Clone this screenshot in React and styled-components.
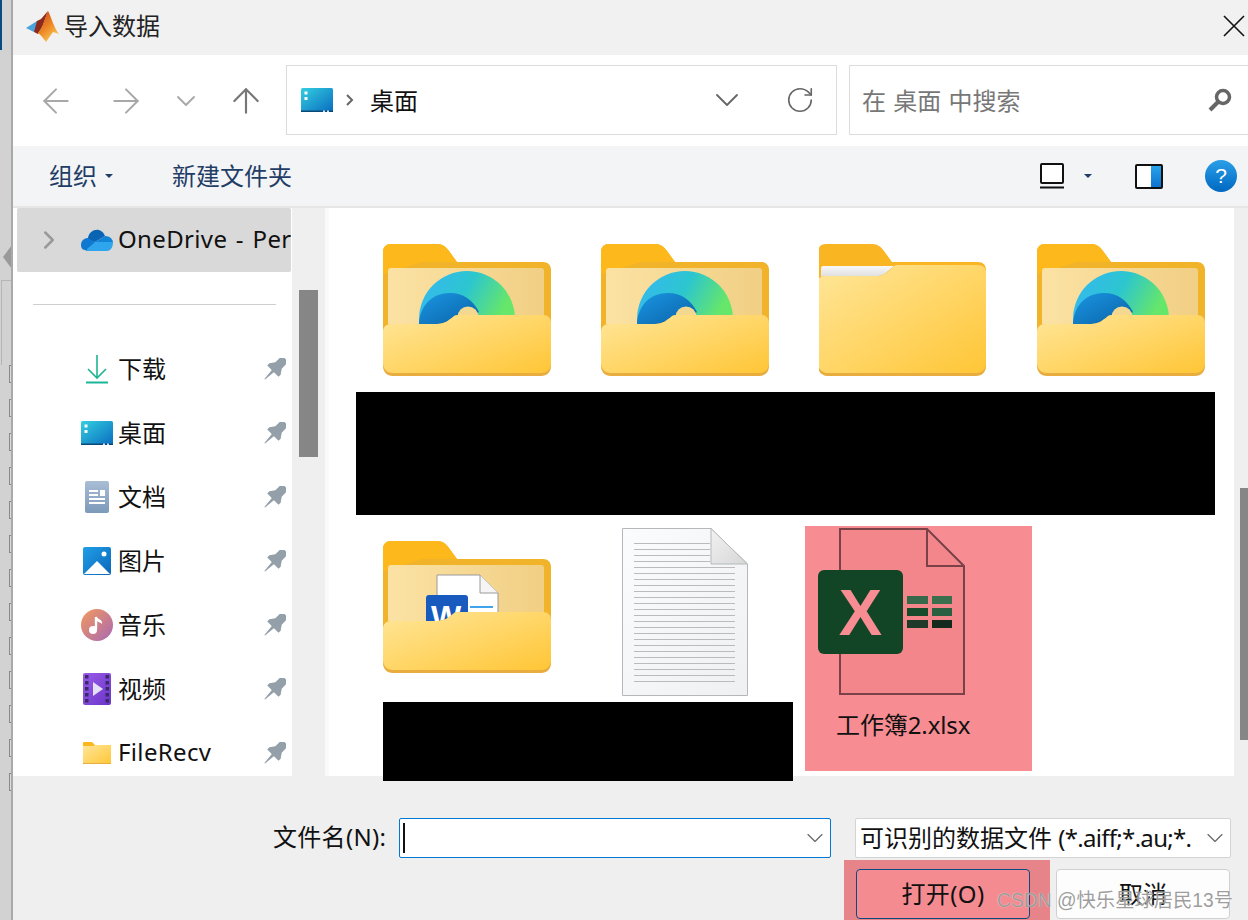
import React from 'react';
import styled, { createGlobalStyle } from 'styled-components';
import { ArrowLeft, ArrowRight, ArrowUp, ChevronDown, ChevronRight, RotateCw } from 'lucide-react';

const uiFont = `"Noto Sans", "Noto Sans CJK SC", sans-serif`;

const GlobalStyle = createGlobalStyle`
  html, body { margin: 0; padding: 0; background: #efefef; }
  * { box-sizing: border-box; }
`;

const Page = styled.div`
  display: flex;
  width: 1248px;
  height: 920px;
  overflow: hidden;
  font-family: ${uiFont};
  color: #111;
`;

// the window behind the dialog
const ParentEdge = styled.div`
  flex: 0 0 13px;
  height: 920px;
  background: #d2d2d2;
  border-right: 2px solid #a9a9a9;
  display: flex;
  flex-direction: column;
  overflow: hidden;
`;
const ParentTab = styled.div`
  flex: none;
  width: 2px;
  height: 50px;
  background: #0a4a80;
`;
const ParentArrow = styled.div`
  flex: none;
  margin: 195px 0 0 3px;
  width: 0;
  height: 0;
  border-top: 12px solid transparent;
  border-bottom: 12px solid transparent;
  border-right: 9px solid #9a9a9a;
`;
const ParentTable = styled.div`
  flex: none;
  margin: 11px 0 0 1px;
  height: 85px;
  border-top: 1px solid #b5b5b5;
  border-left: 1px solid #b5b5b5;
`;
const ParentChecks = styled.div`
  flex: none;
  display: flex;
  flex-direction: column;
  gap: 16px;
  padding-left: 9px;
`;
const ParentCheck = styled.div`
  flex: none;
  width: 6px;
  height: 18px;
  border: 1px solid #8a8a8a;
  background: #dcdcdc;
`;

const Dialog = styled.div`
  flex: 1;
  min-width: 0;
  display: flex;
  flex-direction: column;
`;

const TitleBar = styled.div`
  height: 55px;
  flex: none;
  background: #f1f1f1;
  display: flex;
  align-items: center;
  padding: 0 2px 3px 13px;
`;
const TitleText = styled.span`
  margin-left: 5px;
  padding-bottom: 4px;
  font-size: 24px;
  color: #222;
`;
const CloseButton = styled.div`
  margin-left: auto;
  display: flex;
`;

const NavBar = styled.div`
  height: 91px;
  flex: none;
  background: #fff;
  display: flex;
  align-items: flex-start;
  padding: 10px 0 0 13px;
`;
const NavButton = styled.div`
  flex: none;
  width: 60px;
  height: 72px;
  margin-right: ${(p) => p.$after || 0}px;
  display: flex;
  align-items: center;
  justify-content: center;
  color: ${(p) => p.$color};
`;
const AddressBox = styled.div`
  flex: 0 0 551px;
  height: 70px;
  border: 1.5px solid #dcdcdc;
  display: flex;
  align-items: center;
  padding-left: 14px;
  font-size: 24px;
`;
const Crumb = styled.span`
  margin-left: 16px;
  padding-bottom: 2px;
  color: #111;
`;
const CrumbArrow = styled.svg`
  flex: none;
  margin-left: 12px;
`;
const AddressTail = styled.div`
  margin-left: auto;
  display: flex;
  align-items: center;
  gap: 38px;
  padding-right: 21px;
  color: #666;
`;
const SearchBox = styled.div`
  flex: none;
  width: 410px;
  height: 70px;
  margin-left: 12px;
  border: 1.5px solid #dcdcdc;
  display: flex;
  align-items: center;
  padding: 0 26px 0 12px;
  font-size: 24px;
  color: #777;
`;
const SearchHint = styled.span`
  padding-bottom: 2px;
  word-spacing: 1px;
`;
const SearchIconSlot = styled.div`
  margin-left: auto;
  display: flex;
`;

const CommandBar = styled.div`
  height: 62px;
  flex: none;
  background: #f3f4f6;
  border-bottom: 2px solid #e6e6e6;
  display: flex;
  align-items: center;
  padding: 0 10px 0 36px;
  font-size: 24px;
  color: #1f3d66;
`;
const CommandText = styled.span`
  margin-left: ${(p) => p.$left || 0}px;
  padding-bottom: 4px;
`;
const Caret = styled.span`
  width: 0;
  height: 0;
  margin-left: ${(p) => p.$left || 0}px;
  border-left: 4px solid transparent;
  border-right: 4px solid transparent;
  border-top: 4px solid #1f3d66;
`;
const CommandGroup = styled.div`
  margin-left: ${(p) => p.$left}px;
  display: flex;
  align-items: center;
`;

const Main = styled.div`
  height: 568px;
  flex: none;
  display: flex;
`;

const Sidebar = styled.div`
  flex: 0 0 279px;
  background: #fff;
  overflow: hidden;
`;
const SelectedRow = styled.div`
  height: 64px;
  margin: 0 1px 0 4px;
  background: #d9d9d9;
  border-radius: 2px;
  display: flex;
  align-items: center;
  padding-left: 17px;
  overflow: hidden;
  white-space: nowrap;
  color: #999;
  & > * { flex: none; }
`;
const RowIcon = styled.div`
  margin-left: 17px;
  display: flex;
`;
const RowLabel = styled.span`
  margin-left: 5px;
  padding-bottom: 4px;
  font-size: 24px;
  letter-spacing: ${(p) => (p.$latin ? 0.35 : 0)}px;
  word-spacing: ${(p) => (p.$latin ? 2 : 0)}px;
  color: #111;
`;
const Divider = styled.div`
  margin: 32px 16px 32px 20px;
  height: 1px;
  background: #cfcfcf;
`;
const QuickRow = styled.div`
  height: 64px;
  display: flex;
  align-items: center;
  padding: 0 6px 0 68px;
`;
const IconSlot = styled.div`
  flex: 0 0 32px;
  display: flex;
  justify-content: center;
`;
const PinSlot = styled.div`
  margin-left: auto;
  display: flex;
`;

const ScrollTrack = styled.div`
  flex: 0 0 ${(p) => p.$width}px;
  background: #efefef;
  padding: ${(p) => p.$top}px 0 0 ${(p) => p.$left}px;
`;
const ScrollThumb = styled.div`
  width: ${(p) => p.$width}px;
  height: ${(p) => p.$height}px;
  background: #868686;
`;
const TrackGap = styled.div`
  flex: 0 0 4px;
  background: #fafafa;
`;

const Content = styled.div`
  flex: 1;
  min-width: 0;
  background: #fff;
  padding: 36px 0 0 27px;
  display: flex;
  flex-direction: column;
  & > * { flex: none; }
`;
const IconRow = styled.div`
  display: flex;
  gap: 50px;
  padding-left: 27px;
`;
const Redaction = styled.div`
  position: relative;
  z-index: 1;
  background: #000;
  width: ${(p) => p.$width}px;
  height: ${(p) => p.$height}px;
`;
const WideRedaction = styled(Redaction)`
  margin-top: 16px;
`;
const SecondRow = styled.div`
  margin-top: 11px;
  display: flex;
`;
const SecondLeft = styled.div`
  margin-left: 27px;
  width: 410px;
`;
const SecondIcons = styled.div`
  height: 176px;
  display: flex;
  gap: 71px;
`;
const FolderSlot = styled.div`
  padding-top: 15px;
`;
const DocSlot = styled.div`
  padding-top: 2px;
`;
const SelectedTile = styled.div`
  margin-left: 12px;
  width: 227px;
  height: 245px;
  background: #f78d92;
  padding: 1px 0 0 13px;
  display: flex;
  flex-direction: column;
`;
const TileName = styled.div`
  margin: 12px 0 0 18px;
  font-size: 24px;
  line-height: 32px;
  letter-spacing: -0.1px;
  color: #111;
`;

const Footer = styled.div`
  position: relative;
  flex: 1;
  background: #efefef;
  padding-top: 42px;
`;
const FileRow = styled.div`
  display: flex;
  align-items: center;
  padding-left: 260px;
`;
const FieldLabel = styled.span`
  flex: none;
  width: 126px;
  padding-bottom: 5px;
  font-size: 24px;
  letter-spacing: 0.3px;
`;
const FileInput = styled.div`
  flex: none;
  width: 432px;
  height: 40px;
  background: #fff;
  border: 1.5px solid #0078d4;
  border-radius: 2px;
  display: flex;
  align-items: center;
  padding: 0 1px 0 3px;
  justify-content: space-between;
  color: #666;
`;
const TextCaret = styled.div`
  width: 1.5px;
  height: 30px;
  background: #111;
`;
const TypeSelect = styled.div`
  flex: none;
  margin-left: 24px;
  width: 376px;
  height: 40px;
  background: #fff;
  border: 1px solid #d4d4d4;
  border-radius: 2px;
  display: flex;
  align-items: center;
  padding: 0 1px 0 4px;
  color: #666;
`;
const TypeText = styled.div`
  width: 332px;
  margin-right: auto;
  padding-bottom: 4px;
  overflow: hidden;
  white-space: nowrap;
  font-size: 24px;
  color: #111;
`;
const FilterPattern = styled.span`
  letter-spacing: -0.7px;
`;
const ButtonRow = styled.div`
  margin-top: 2px;
  display: flex;
  justify-content: flex-end;
  padding-right: 18px;
`;
const OpenMark = styled.div`
  width: 206px;
  height: 60px;
  background: #e78489;
  padding: 9px 20px 0 12px;
`;
const DialogButton = styled.div`
  height: 50px;
  width: 174px;
  margin-left: ${(p) => (p.$primary ? 0 : 6)}px;
  margin-top: ${(p) => (p.$primary ? 0 : 9)}px;
  padding-bottom: 4px;
  background: ${(p) => (p.$primary ? '#f48b90' : '#fdfdfd')};
  border: 1px solid ${(p) => (p.$primary ? '#0a4a80' : '#d0d0d0')};
  border-radius: 4px;
  display: flex;
  align-items: center;
  justify-content: center;
  font-size: 24px;
  letter-spacing: ${(p) => (p.$primary ? 0.4 : 0)}px;
  color: #111;
`;
const Watermark = styled.div`
  position: absolute;
  left: 984px;
  top: 114px;
  font-family: "Liberation Sans", "Noto Sans CJK SC", sans-serif;
  font-size: 19.3px;
  line-height: 22px;
  white-space: nowrap;
  color: rgba(140, 140, 140, 0.85);
  text-shadow: 0 0 1px rgba(255, 255, 255, 0.9);
`;
const GradientDefs = styled.svg`
  position: absolute;
  width: 0;
  height: 0;
`;

const SharedGradients = () => (
  <GradientDefs aria-hidden="true">
    <defs>
      <linearGradient id="front" x1="0" y1="0" x2="1" y2="1">
        <stop offset="0" stopColor="#ffe699" />
        <stop offset="1" stopColor="#ffc636" />
      </linearGradient>
      <linearGradient id="inner" x1="0" y1="0" x2="1" y2="0">
        <stop offset="0" stopColor="#fbe2a4" />
        <stop offset="1" stopColor="#f1cf84" />
      </linearGradient>
      <linearGradient id="edge" x1="0" y1="0" x2="1" y2="0.3">
        <stop offset="0" stopColor="#37b6f6" />
        <stop offset="0.55" stopColor="#2cc6cf" />
        <stop offset="1" stopColor="#66e66a" />
      </linearGradient>
      <linearGradient id="edgeDark" x1="0" y1="0" x2="1" y2="1">
        <stop offset="0" stopColor="#1a96e2" />
        <stop offset="1" stopColor="#0a62a8" />
      </linearGradient>
      <linearGradient id="desktop" x1="0" y1="0" x2="1" y2="1">
        <stop offset="0" stopColor="#33cfe0" />
        <stop offset="1" stopColor="#0a6cc0" />
      </linearGradient>
      <linearGradient id="doc" x1="0" y1="0" x2="0" y2="1">
        <stop offset="0" stopColor="#a9bdd5" />
        <stop offset="1" stopColor="#7c9aba" />
      </linearGradient>
      <linearGradient id="picture" x1="0" y1="0" x2="1" y2="1">
        <stop offset="0" stopColor="#1f9fe6" />
        <stop offset="1" stopColor="#0d66bb" />
      </linearGradient>
      <linearGradient id="music" x1="0" y1="0" x2="1" y2="1">
        <stop offset="0" stopColor="#f39a5c" />
        <stop offset="1" stopColor="#a968b4" />
      </linearGradient>
      <linearGradient id="video" x1="0" y1="0" x2="1" y2="1">
        <stop offset="0" stopColor="#9a5be8" />
        <stop offset="1" stopColor="#6a35c8" />
      </linearGradient>
      <linearGradient id="help" x1="0" y1="0" x2="0" y2="1">
        <stop offset="0" stopColor="#2a9fe8" />
        <stop offset="1" stopColor="#0068c2" />
      </linearGradient>
      <linearGradient id="pane" x1="0" y1="0" x2="0" y2="1">
        <stop offset="0" stopColor="#27a3ea" />
        <stop offset="1" stopColor="#0d73cf" />
      </linearGradient>
      <linearGradient id="paper" x1="0" y1="0" x2="1" y2="1">
        <stop offset="0" stopColor="#fbfcfd" />
        <stop offset="1" stopColor="#eef0f2" />
      </linearGradient>
      <linearGradient id="fold" x1="0" y1="0" x2="1" y2="1">
        <stop offset="0" stopColor="#f2f2f2" />
        <stop offset="1" stopColor="#d6d6d6" />
      </linearGradient>
      <linearGradient id="sheet" x1="0" y1="0" x2="0" y2="1">
        <stop offset="0" stopColor="#f8f8f8" />
        <stop offset="1" stopColor="#dcdcdc" />
      </linearGradient>
      <linearGradient id="peak" x1="0" y1="0" x2="0.6" y2="1">
        <stop offset="0" stopColor="#c9401a" />
        <stop offset="0.6" stopColor="#ee8a26" />
        <stop offset="1" stopColor="#f9c75c" />
      </linearGradient>
    </defs>
  </GradientDefs>
);

const MatlabLogo = () => (
  <svg width="33" height="31" viewBox="0 0 33 31">
    <path d="M0 17 L11 10 L19 15 L12 21 L8 21 Z" fill="#4aa3dc" />
    <path d="M11 10 L15 8 L22 0 L17 14 L12 23 L8 21 Z" fill="#8e2a1c" />
    <path d="M22 0 C25 5 27 15 33 23 L27 21 L20 31 C17 27 15 24 12 22 C17 16 19 7 22 0 Z" fill="url(#peak)" />
  </svg>
);

const DesktopIcon = ({ width = 32, height = 24 }) => (
  <svg width={width} height={height} viewBox="0 0 32 24">
    <rect width="32" height="24" rx="1.5" fill="url(#desktop)" />
    <rect y="22.5" width="32" height="1.5" fill="#0a4a78" />
    <rect x="3.5" y="3.5" width="3" height="3" fill="#fff" />
    <rect x="3.5" y="9" width="3" height="3" fill="#fff" />
    <rect x="22" y="22.5" width="2" height="1.5" fill="#cfe6f5" />
    <rect x="26" y="22.5" width="2" height="1.5" fill="#cfe6f5" />
  </svg>
);

const OneDriveIcon = () => (
  <svg width="32" height="22" viewBox="0 0 32 22">
    <path d="M7 9 C8 3 13 0 18 1 C21 2 23 4 24 7 L14 13 L5 10 Z" fill="#0a64b4" />
    <path d="M14 13 L24 7 C28 7 31 9 32 13 L20 18 Z" fill="#1284d8" />
    <path d="M4 21 C1 21 0 18 0 16 C0 12 3 9 7 9 L14 13 L20 18 L14 22 L6 22 Z" fill="#0f78d0" />
    <path d="M6 22 L26 22 C29 22 32 19 32 13 L14 13 L6 20 Z" fill="#2ea5ec" />
  </svg>
);

const DownloadIcon = () => (
  <svg width="24" height="30" viewBox="0 0 24 30">
    <path d="M12 1 V24 M3 15 L12 24 L21 15" fill="none" stroke="#1fb591" strokeWidth="1.6" />
    <rect x="1" y="27.5" width="22" height="2" fill="#1ab59a" />
  </svg>
);

const DocsIcon = () => (
  <svg width="24" height="32" viewBox="0 0 24 32">
    <rect width="24" height="32" rx="2" fill="url(#doc)" />
    <path d="M4 10 H13 M4 14 H13 M4 18 H20 M4 22 H20" stroke="#fff" strokeWidth="1.8" />
    <rect x="15" y="9" width="5" height="6" fill="#fff" />
  </svg>
);

const PicturesIcon = () => (
  <svg width="28" height="28" viewBox="0 0 28 28">
    <rect width="28" height="28" rx="2" fill="url(#picture)" />
    <circle cx="21" cy="7" r="2.5" fill="#fff" />
    <path d="M1 27 L14 14 L27 27 Z" fill="#fff" />
  </svg>
);

const MusicIcon = () => (
  <svg width="32" height="32" viewBox="0 0 32 32">
    <circle cx="16" cy="16" r="16" fill="url(#music)" />
    <path d="M15 8 V20" stroke="#fff" strokeWidth="2.4" />
    <path d="M15 7 C16 10 20 10 21 13 L21 15 C19 13 17 13 15 12 Z" fill="#fff" />
    <circle cx="12" cy="21" r="4" fill="#fff" />
  </svg>
);

const VideoIcon = () => (
  <svg width="28" height="32" viewBox="0 0 28 32">
    <rect width="28" height="32" rx="2" fill="url(#video)" />
    {[2, 8, 14, 20, 26].map((y) => (
      <g key={y} fill="#3a2a6a">
        <rect x="2" y={y} width="3.5" height="3.5" />
        <rect x="22.5" y={y} width="3.5" height="3.5" />
      </g>
    ))}
    <path d="M10 9 L20 16 L10 23 Z" fill="#e6e0f6" />
  </svg>
);

const SmallFolderIcon = () => (
  <svg width="28" height="22" viewBox="0 0 28 22">
    <path d="M0 1 C0 0 1 0 1 0 H9 L12 3 H28 V10 H0 Z" fill="#fcb71c" />
    <path d="M0 4 H10 L12 3 H28 V21 C28 22 27 22 27 22 H1 C0 22 0 21 0 21 Z" fill="url(#front)" />
    <rect y="21" width="28" height="1" fill="#e8ad3e" />
  </svg>
);

const PinIcon = () => (
  <svg width="22" height="22" viewBox="0 0 22 22">
    <g transform="rotate(45 11 11)" fill="#93a0a9">
      <path d="M5 -3.5 H17 V-1 H15.5 V6 L19 11 V14 H3 V11 L6.5 6 V-1 H5 Z" />
      <path d="M9.4 13 H12.6 L11.5 25.5 H10.5 Z" />
    </g>
  </svg>
);

const SearchIcon = () => (
  <svg width="24" height="24" viewBox="0 0 24 24">
    <circle cx="15" cy="9" r="6.5" fill="none" stroke="#666" strokeWidth="3.5" />
    <path d="M10 14 L2 22" stroke="#666" strokeWidth="4" />
  </svg>
);

const ViewIcon = () => (
  <svg width="24" height="26" viewBox="0 0 24 26">
    <rect x="1" y="1" width="22" height="19" rx="1" fill="#fff" stroke="#111" strokeWidth="2" />
    <rect x="0" y="23.5" width="24" height="2" fill="#111" />
  </svg>
);

const PaneIcon = () => (
  <svg width="28" height="25" viewBox="0 0 28 25">
    <rect x="1" y="1" width="26" height="23" rx="1" fill="#fff" stroke="#111" strokeWidth="2" />
    <rect x="16" y="2" width="10" height="21" fill="url(#pane)" />
  </svg>
);

const HelpIcon = () => (
  <svg width="32" height="32" viewBox="0 0 32 32">
    <circle cx="16" cy="16" r="16" fill="url(#help)" />
    <text x="16" y="23" textAnchor="middle" fontFamily="Liberation Sans, sans-serif" fontSize="21" fill="#fff">?</text>
  </svg>
);

// folder back, what peeks out of it, and the front flap
const FolderBack = () => (
  <>
    <path d="M0 8 C0 3 3 0 8 0 H54 C60 0 63 3 66 7 L74 18 H160 C165 18 168 21 168 26 V100 H0 Z" fill="#f0b32a" />
    <path d="M0 8 C0 3 3 0 8 0 H54 C60 0 63 3 66 7 L74 18 H40 L0 30 Z" fill="#fdb91c" />
  </>
);
const FolderFront = () => (
  <>
    <path d="M0 88 C0 83 3 80 8 80 H54 C62 80 66 76 70 73 C72 71 74 71 78 71 H160 C165 71 168 74 168 79 V122 C168 128 164 132 158 132 H10 C4 132 0 128 0 122 Z" fill="#e8ad3e" />
    <path d="M0 88 C0 83 3 80 8 80 H54 C62 80 66 76 70 73 C72 71 74 71 78 71 H160 C165 71 168 74 168 79 V119 C168 125 164 129 158 129 H10 C4 129 0 125 0 119 Z" fill="url(#front)" />
  </>
);
const FolderFrame = ({ children }) => (
  <svg width="168" height="132" viewBox="0 0 168 132">
    <FolderBack />
    <rect x="5" y="24" width="156" height="70" rx="3" fill="url(#inner)" />
    {children}
    <FolderFront />
  </svg>
);

const EdgeFolder = () => (
  <FolderFrame>
    <path d="M36 80 V75 A48 48 0 0 1 132 75 V80 Z" fill="url(#edge)" />
    <path d="M36 80 V78 C38 60 50 49 67 49 C80 49 90 56 96 68 L80 80 Z" fill="url(#edgeDark)" />
    <circle cx="85" cy="73" r="10.5" fill="#f5d890" />
  </FolderFrame>
);

const WordFolder = () => (
  <FolderFrame>
    <path d="M54 34 H97 L115 52 V90 H54 Z" fill="#fff" stroke="#9a9a9a" strokeWidth="1" />
    <path d="M97 34 V52 H115" fill="#f5f5f5" stroke="#9a9a9a" strokeWidth="1" />
    <rect x="87" y="65" width="23" height="2" fill="#41a5ee" />
    <rect x="43" y="54" width="42" height="40" rx="3" fill="#185abd" />
    <text x="63" y="87" textAnchor="middle" fontFamily="Liberation Sans, sans-serif" fontWeight="700" fontSize="32" fill="#fff">W</text>
  </FolderFrame>
);

const PaperFolder = () => (
  <svg width="168" height="132" viewBox="1 0 168 132">
    <path d="M0 8 C0 3 3 0 8 0 H54 C60 0 63 3 66 7 L74 18 H160 C165 18 168 21 168 26 V100 H0 Z" fill="#f9b522" />
    <path d="M3 34 V24 C3 23 4 22 5 22 H76 L62 34 Z" fill="url(#sheet)" />
    <path d="M0 38 C0 34 3 32 8 32 H60 C65 32 70 28 74 24 C76 21 78 21 80 21 H160 C165 21 168 24 168 28 V122 C168 128 164 132 158 132 H10 C4 132 0 128 0 122 Z" fill="#e8ad3e" />
    <path d="M0 38 C0 34 3 32 8 32 H60 C65 32 70 28 74 24 C76 21 78 21 80 21 H160 C165 21 168 24 168 28 V119 C168 125 164 129 158 129 H10 C4 129 0 125 0 119 Z" fill="url(#front)" />
  </svg>
);

const TextDocument = () => {
  const lines = Array.from({ length: 24 }, (_, i) => 15.5 + i * 6);
  return (
    <svg width="126" height="168" viewBox="0 0 126 168">
      <path d="M0.5 0.5 H89 L125.5 36 V167.5 H0.5 Z" fill="url(#paper)" stroke="#b4b8ba" />
      {lines.map((y, i) => (
        <path key={y} d={`M12 ${y} H${i < 4 ? 88 : 113}`} stroke="#bbb" strokeWidth="1" />
      ))}
      <path d="M89 0.5 V36 H125.5 Z" fill="url(#fold)" stroke="#b4b8ba" />
    </svg>
  );
};

const ExcelFile = () => (
  <svg width="150" height="170" viewBox="0 0 150 170">
    <path d="M22 2 H109 L146 39 V167 H22 Z" fill="#f3868b" stroke="#7a4148" strokeWidth="2" />
    <path d="M109 2 V39 H146" fill="none" stroke="#7a4148" strokeWidth="2" />
    <rect x="0" y="43" width="85" height="84" rx="6" fill="#114525" />
    <text x="42.5" y="108" textAnchor="middle" fontFamily="Liberation Sans, sans-serif" fontWeight="700" fontSize="65" fill="#f78d92">X</text>
    <rect x="89" y="69" width="21" height="8" fill="#35694a" />
    <rect x="114" y="69" width="20" height="8" fill="#3a6f4e" />
    <rect x="89" y="81" width="21" height="8" fill="#154a2a" />
    <rect x="114" y="81" width="20" height="8" fill="#2a6040" />
    <rect x="89" y="93" width="21" height="8" fill="#1f3a28" />
    <rect x="114" y="93" width="20" height="8" fill="#142a1c" />
  </svg>
);

const quickAccess = [
  { label: '下载', icon: <DownloadIcon /> },
  { label: '桌面', icon: <DesktopIcon /> },
  { label: '文档', icon: <DocsIcon /> },
  { label: '图片', icon: <PicturesIcon /> },
  { label: '音乐', icon: <MusicIcon /> },
  { label: '视频', icon: <VideoIcon /> },
  { label: 'FileRecv', icon: <SmallFolderIcon />, latin: true },
];

const App = () => (
  <Page>
    <GlobalStyle />
    <SharedGradients />
    <ParentEdge>
      <ParentTab />
      <ParentArrow />
      <ParentTable />
      <ParentChecks>
        {Array.from({ length: 13 }, (_, i) => (
          <ParentCheck key={i} />
        ))}
      </ParentChecks>
    </ParentEdge>

    <Dialog>
      <TitleBar>
        <MatlabLogo />
        <TitleText>导入数据</TitleText>
        <CloseButton>
          <svg width="24" height="24" viewBox="0 0 24 24">
            <path d="M2 2 L22 22 M22 2 L2 22" stroke="#111" strokeWidth="1.6" />
          </svg>
        </CloseButton>
      </TitleBar>

      <NavBar>
        <NavButton $color="#a8a8a8" $after={10}><ArrowLeft size={40} strokeWidth={1.2} /></NavButton>
        <NavButton $color="#a8a8a8"><ArrowRight size={40} strokeWidth={1.2} /></NavButton>
        <NavButton $color="#a8a8a8"><ChevronDown size={32} strokeWidth={1.4} /></NavButton>
        <NavButton $color="#777" $after={10}><ArrowUp size={40} strokeWidth={1.3} /></NavButton>
        <AddressBox>
          <DesktopIcon />
          <CrumbArrow width="9" height="14" viewBox="0 0 9 14">
            <path d="M2 2 L7 7 L2 12" fill="none" stroke="#666" strokeWidth="2" />
          </CrumbArrow>
          <Crumb>桌面</Crumb>
          <AddressTail>
            <ChevronDown size={40} strokeWidth={1.1} />
            <RotateCw size={30} strokeWidth={1.3} />
          </AddressTail>
        </AddressBox>
        <SearchBox>
          <SearchHint>在 桌面 中搜索</SearchHint>
          <SearchIconSlot><SearchIcon /></SearchIconSlot>
        </SearchBox>
      </NavBar>

      <CommandBar>
        <CommandText>组织</CommandText>
        <Caret $left={8} />
        <CommandText $left={59}>新建文件夹</CommandText>
        <CommandGroup $left={748}>
          <ViewIcon />
          <Caret $left={20} />
        </CommandGroup>
        <CommandGroup $left={43}><PaneIcon /></CommandGroup>
        <CommandGroup $left={42}><HelpIcon /></CommandGroup>
      </CommandBar>

      <Main>
        <Sidebar>
          <SelectedRow>
            <ChevronRight size={30} strokeWidth={2} />
            <RowIcon><OneDriveIcon /></RowIcon>
            <RowLabel $latin>OneDrive - Personal</RowLabel>
          </SelectedRow>
          <Divider />
          {quickAccess.map((item) => (
            <QuickRow key={item.label}>
              <IconSlot>{item.icon}</IconSlot>
              <RowLabel $latin={item.latin}>{item.label}</RowLabel>
              <PinSlot><PinIcon /></PinSlot>
            </QuickRow>
          ))}
        </Sidebar>
        <ScrollTrack $width={33} $top={82} $left={7}>
          <ScrollThumb $width={19} $height={167} />
        </ScrollTrack>
        <TrackGap />
        <Content>
          <IconRow>
            <EdgeFolder />
            <EdgeFolder />
            <PaperFolder />
            <EdgeFolder />
          </IconRow>
          <WideRedaction $width={859} $height={123} />
          <SecondRow>
            <SecondLeft>
              <SecondIcons>
                <FolderSlot><WordFolder /></FolderSlot>
                <DocSlot><TextDocument /></DocSlot>
              </SecondIcons>
              <Redaction $width={410} $height={79} />
            </SecondLeft>
            <SelectedTile>
              <ExcelFile />
              <TileName>工作簿2.xlsx</TileName>
            </SelectedTile>
          </SecondRow>
        </Content>
        <ScrollTrack $width={14} $top={280} $left={6}>
          <ScrollThumb $width={8} $height={252} />
        </ScrollTrack>
      </Main>

      <Footer>
        <FileRow>
          <FieldLabel>文件名(N):</FieldLabel>
          <FileInput>
            <TextCaret />
            <ChevronDown size={28} strokeWidth={1} />
          </FileInput>
          <TypeSelect>
            <TypeText>可识别的数据文件 <FilterPattern>(*.aiff;*.au;*.avi;*.csv)</FilterPattern></TypeText>
            <ChevronDown size={28} strokeWidth={1} />
          </TypeSelect>
        </FileRow>
        <ButtonRow>
          <OpenMark>
            <DialogButton $primary>打开(O)</DialogButton>
          </OpenMark>
          <DialogButton>取消</DialogButton>
        </ButtonRow>
        <Watermark>CSDN @快乐星球居民13号</Watermark>
      </Footer>
    </Dialog>
  </Page>
);

export default App;
